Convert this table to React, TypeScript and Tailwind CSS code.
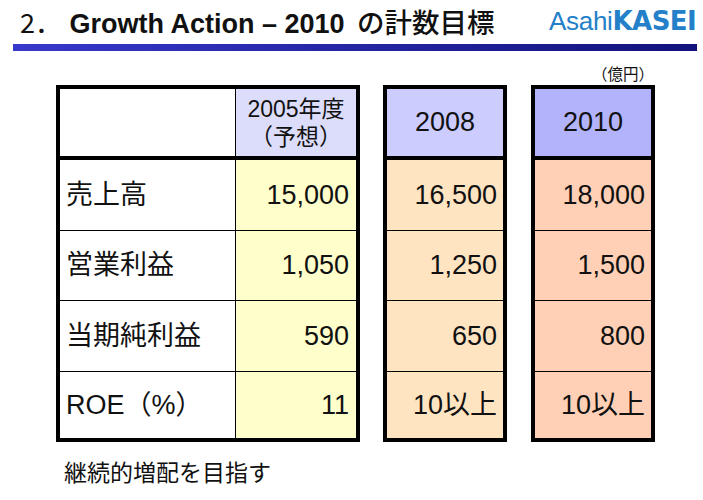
import React from "react";

const rows = [
  { label: "売上高", y2005: "15,000", y2008: "16,500", y2010: "18,000" },
  { label: "営業利益", y2005: "1,050", y2008: "1,250", y2010: "1,500" },
  { label: "当期純利益", y2005: "590", y2008: "650", y2010: "800" },
  { label: "ROE（%）", y2005: "11", y2008: "10以上", y2010: "10以上" },
];

// row heights incl. the 1px rule under each row (last row has none)
const rowH = ["h-[71px] border-b", "h-[70px] border-b", "h-[71px] border-b", "h-[66px]"];

function YearTable({ year, head, body }: { year: string; head: string; body: string }) {
  return (
    <div className="w-[124px] border-4 border-black">
      <div className={`h-[71px] border-b-4 border-black ${head} flex items-center justify-center text-[27px]`}>
        {year}
      </div>
      {rows.map((r, i) => (
        <div
          key={r.label}
          className={`${rowH[i]} border-black ${body} flex items-center justify-end pr-[6px] text-[27px]`}
        >
          {year === "2008" ? r.y2008 : r.y2010}
        </div>
      ))}
    </div>
  );
}

export default function App() {
  return (
    <div className="w-[703px] h-[500px] bg-white text-[#111] font-['Liberation_Sans','Noto_Sans_CJK_JP',sans-serif] overflow-hidden">
      <header className="flex justify-between items-start pl-[20px] pr-[7px] pt-[6px] h-[44px]">
        <h1 className="text-[27px] leading-[31px] whitespace-nowrap">
          <span className="font-['Noto_Sans_CJK_JP'] font-normal">2．</span>
          <span className="font-bold"> Growth Action – 2010 </span>
          <span className="ml-[5px] text-[27.5px] font-['Noto_Sans_CJK_JP'] font-medium">の計数目標</span>
        </h1>
        <div className="text-[26px] leading-[28px] text-[#2380c9] whitespace-nowrap mt-[1px]">
          <span className="tracking-[-0.3px]">Asahi</span>
          <span className="font-['DejaVu_Sans'] font-bold tracking-[-0.6px]">KASEI</span>
        </div>
      </header>

      <div className="ml-[13px] w-[684px] h-[7px] bg-gradient-to-r from-[#3838cc] to-[#12127c]" />

      <div className="flex justify-end pr-[49px] pt-[12px] h-[34px] text-[15.5px] leading-[20px] font-['Noto_Sans_CJK_JP']">
        （億円）
      </div>

      <div className="flex ml-[56px] gap-[23px]">
        <div className="w-[304px] border-4 border-black">
          <div className="h-[71px] border-b-4 border-black flex">
            <div className="w-[176px] border-r border-black bg-white" />
            <div className="flex-1 bg-[#dcdcfb] flex flex-col items-center justify-center text-[23px] leading-[28px]">
              <span>2005年度</span>
              <span>（予想）</span>
            </div>
          </div>
          {rows.map((r, i) => (
            <div key={r.label} className={`${rowH[i]} border-black flex`}>
              <div className="w-[176px] border-r border-black bg-white flex items-center pl-[6px] text-[27px]">
                {r.label}
              </div>
              <div className="flex-1 bg-[#ffffcc] flex items-center justify-end pr-[7px] text-[27px]">
                {r.y2005}
              </div>
            </div>
          ))}
        </div>
        <YearTable year="2008" head="bg-[#ccccff]" body="bg-[#ffe4c2]" />
        <div className="ml-px">
          <YearTable year="2010" head="bg-[#b3b3fc]" body="bg-[#ffd0b5]" />
        </div>
      </div>

      <p className="ml-[64px] mt-[14px] text-[23px] leading-[30px] font-['Noto_Sans_CJK_JP']">
        継続的増配を目指す
      </p>
    </div>
  );
}
